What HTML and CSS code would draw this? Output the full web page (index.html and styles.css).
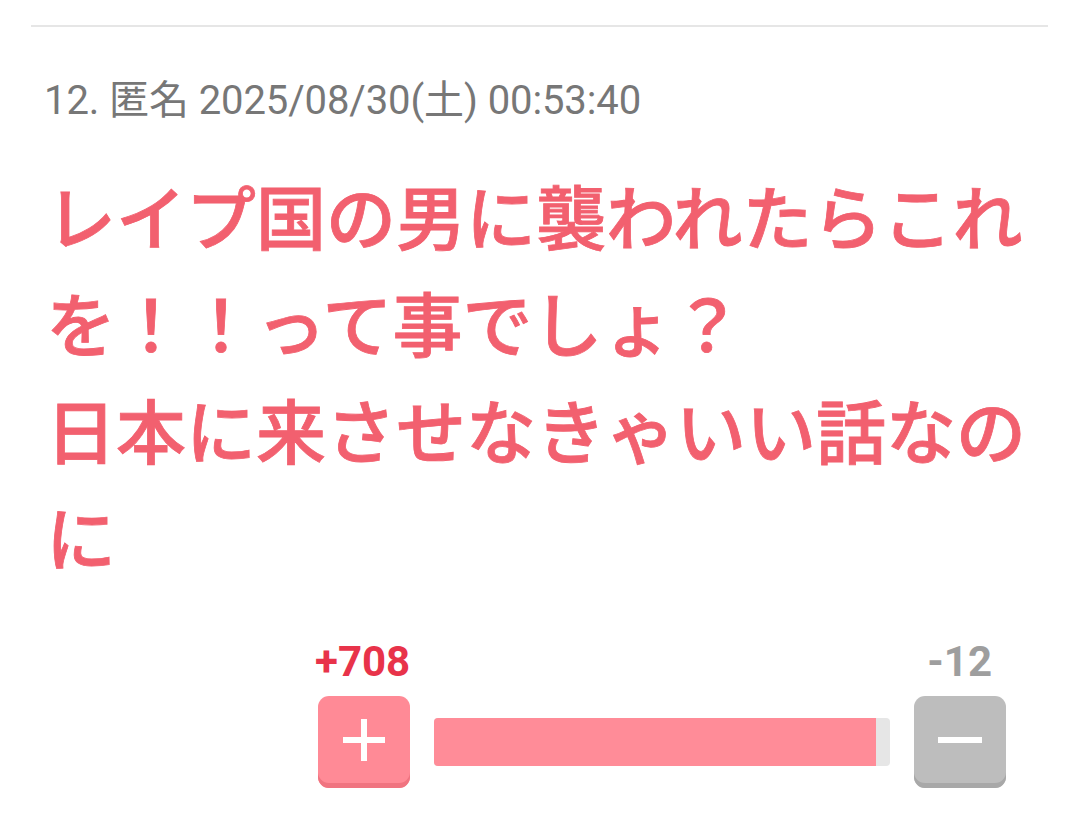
FILE: index.html
```html
<!DOCTYPE html>
<html lang="ja">
<head>
  <meta charset="UTF-8">
  <title>12. 匿名</title>
  <meta name="viewport" content="width=device-width, initial-scale=1.0">
  <link rel="stylesheet" href="styles.css">
</head>
<body>

  <div class="divider"></div>

  <div class="res">
    <div class="res-meta">12. 匿名 2025/08/30(土) 00:53:40</div>
    <div class="res-body">レイプ国の男に襲われたらこれを！！って事でしょ？<br>日本に来させなきゃいい話なのに</div>

    <div class="vote">
      <div class="vote-counts">
        <span class="count-plus">+708</span>
        <span class="count-minus">-12</span>
      </div>
      <div class="vote-row">
        <button type="button" class="vote-btn plus" aria-label="プラス">
          <svg width="44" height="44" viewBox="0 0 44 44"><path d="M22 1v42M1 22h42" stroke="#fff" stroke-width="6"/></svg>
        </button>
        <div class="vote-bar">
          <div class="vote-fill" style="width: 97%"></div>
        </div>
        <button type="button" class="vote-btn minus" aria-label="マイナス">
          <svg width="44" height="44" viewBox="0 0 44 44"><path d="M0 22h44" stroke="#fff" stroke-width="6"/></svg>
        </button>
      </div>
    </div>
  </div>

</body>
</html>
```

FILE: styles.css
```css
body {
  margin: 0;
  background-color: #ffffff;
  font-family: Roboto, "Noto Sans CJK JP", sans-serif;
}
.divider {
  margin: 25px 32px 0 31px;
  height: 2px;
  background-color: #e6e6e6;
}
.res {
  padding: 52px 40px 0 44px;
}
.res-meta {
  font-size: 40px;
  line-height: 44px;
  color: #777777;
  letter-spacing: -0.1px;
}
.res-body {
  margin-top: 38px;
  font-family: "Noto Sans CJK JP", sans-serif;
  font-size: 70px;
  font-weight: 500;
  -webkit-text-stroke: 0.8px #f2606f;
  line-height: 107px;
  color: #f2606f;
  padding-left: 2px;
}
.vote {
  margin: 51px 34px 0 274px;
}
.vote-counts {
  display: flex;
  justify-content: space-between;
  font-size: 42px;
  font-weight: bold;
  line-height: 44px;
  padding-right: 14px;
}
.count-plus {
  color: #e8334a;
  margin-left: -3px;
}
.count-minus {
  color: #9e9e9e;
}
.vote-row {
  display: flex;
  align-items: center;
  gap: 24px;
  margin-top: 12px;
}
.vote-btn {
  width: 92px;
  height: 92px;
  border: none;
  border-radius: 11px;
  padding: 0;
  display: flex;
  align-items: center;
  justify-content: center;
  flex-shrink: 0;
  cursor: pointer;
}
.vote-btn.plus {
  background-color: #ff8a96;
  box-shadow: inset 0 -5px 0 #f07480;
}
.vote-btn.minus {
  background-color: #bdbdbd;
  box-shadow: inset 0 -5px 0 #a8a8a8;
}
.vote-btn svg {
  margin-bottom: 4px;
}
.vote-bar {
  flex: 1;
  height: 48px;
  background-color: #e6e6e6;
  border-radius: 4px;
  overflow: hidden;
}
.vote-fill {
  height: 100%;
  background-color: #ff8c98;
}
```
